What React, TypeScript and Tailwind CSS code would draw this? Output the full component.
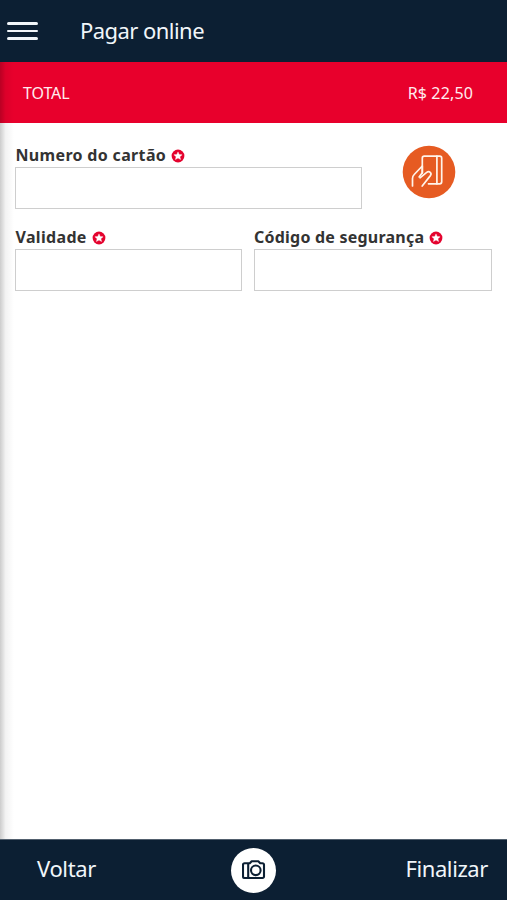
import { useState } from "react";

interface FieldProps {
  id: string;
  label: string;
  className: string;
  labelClassName?: string;
}

const RequiredMark = () => (
  <svg viewBox="0 0 14 14" className="mt-[2px] size-[14px] shrink-0" aria-hidden="true">
    <circle cx="7" cy="7" r="6.4" fill="#e4032e" />
    <path
      d="M7 2.9 8.2 5.5l2.9.3-2.2 1.9.7 2.8L7 9.1l-2.6 1.4.7-2.8-2.2-1.9 2.9-.3z"
      fill="#fff"
      stroke="#fff"
      strokeWidth="0.4"
    />
  </svg>
);

const Field: React.FC<FieldProps> = ({
  id,
  label,
  className,
  labelClassName = "tracking-[0.33px]",
}) => {
  const [value, setValue] = useState("");

  return (
    <div className={className}>
      <label
        htmlFor={id}
        className="flex h-6 items-center gap-[5px] pl-[0.5px] text-[16px] font-bold whitespace-nowrap text-[#333]"
      >
        <span className={labelClassName}>{label}</span>
        <RequiredMark />
      </label>
      <input
        id={id}
        value={value}
        onChange={(e) => setValue(e.target.value)}
        className="block h-[42px] w-full border border-[#cecece] bg-white px-2 outline-none"
      />
    </div>
  );
};

const CardScanIcon = () => (
  <svg viewBox="0 0 54 54" className="size-[54px]" fill="none" aria-hidden="true">
    <circle cx="27" cy="27" r="26.3" fill="#e65b22" />
    <g stroke="#fff4ea" strokeWidth="1.7" strokeLinecap="round" strokeLinejoin="round">
      <path d="M20.3 28V13.2a2 2 0 0 1 2-2h15.4a2 2 0 0 1 2 2v23.6a2 2 0 0 1-2 2H26.5" />
      <path d="M34.9 11.2v27.6" />
      <path d="M10.5 41v-7.6c0-1.7.6-2.8 1.7-3.9l8.1-8.5v6.7l-3.2 4.2" />
      <path d="M18 32.8l6.7-5.4c2.6-1.9 5.5.8 3.7 3.2L20.2 41" />
    </g>
  </svg>
);

const CameraIcon = () => (
  <svg
    viewBox="0 0 24 20"
    className="ml-px h-5 w-6"
    fill="none"
    stroke="#0c1f33"
    strokeWidth="2.1"
    strokeLinejoin="round"
    aria-hidden="true"
  >
    <path d="M2.5 3.2h5.3L9.7 1.2h6.6l1.9 2h2.3a1.5 1.5 0 0 1 1.5 1.5v11.8a1.5 1.5 0 0 1-1.5 1.5h-18A1.5 1.5 0 0 1 1 16.5V4.7a1.5 1.5 0 0 1 1.5-1.5z" />
    <path d="M6.2 3.2V18" />
    <circle cx="13.8" cy="10.3" r="4.8" />
  </svg>
);

export default function App() {
  return (
    <div className="relative flex h-[900px] w-[507px] flex-col overflow-hidden bg-white font-['Noto_Sans',sans-serif]">
      <header className="flex h-[62px] shrink-0 items-center bg-[#0c1f33] pl-[7px] text-[#f1f6fa]">
        <button aria-label="Menu" className="flex w-[31px] flex-col gap-[5px]">
          <span className="h-[2.5px] rounded-full bg-[#f1f6fa]" />
          <span className="h-[2.5px] rounded-full bg-[#f1f6fa]" />
          <span className="h-[2.5px] rounded-full bg-[#f1f6fa]" />
        </button>
        <h1 className="mb-[2px] ml-[42px] text-[22px] tracking-[-0.55px]">Pagar online</h1>
      </header>

      <section className="flex h-[61px] shrink-0 items-center justify-between bg-[#e8002c] pr-[34px] pl-[23px] text-[16px] text-[#ffecef]">
        <span className="tracking-[-0.1px]">TOTAL</span>
        <span className="tracking-[0.15px]">R$ 22,50</span>
      </section>

      <main className="flex-1 px-[15px] pt-5">
        <div className="flex">
          <Field id="card-number" label="Numero do cartão" className="w-[347px]" />
          <button aria-label="Escanear cartão" className="mt-[2px] ml-[40px] size-[54px]">
            <CardScanIcon />
          </button>
        </div>
        <div className="mt-4 flex gap-3">
          <Field id="expiry" label="Validade" className="w-[227px]" />
          <Field
            id="cvv"
            label="Código de segurança"
            className="w-[239px]"
            labelClassName="tracking-[0.22px]"
          />
        </div>
      </main>

      <footer className="grid h-[61px] shrink-0 grid-cols-3 items-center border-t border-[#52606e] bg-[#0c1f33] pr-[19px] pl-[37px] text-[22px] text-[#f1f6fa]">
        <button className="mb-[3px] justify-self-start tracking-[-0.35px]">Voltar</button>
        <button
          aria-label="Câmera"
          className="mr-[17px] flex size-[45px] items-center justify-center justify-self-center rounded-full bg-white"
        >
          <CameraIcon />
        </button>
        <button className="mb-[3px] justify-self-end tracking-[-0.4px]">Finalizar</button>
      </footer>

      {/* Drawer shadow along the left edge */}
      <div className="pointer-events-none absolute top-[62px] bottom-[61px] left-0 w-[14px] bg-linear-to-r from-black/20 via-black/5 via-40% to-transparent" />
    </div>
  );
}
